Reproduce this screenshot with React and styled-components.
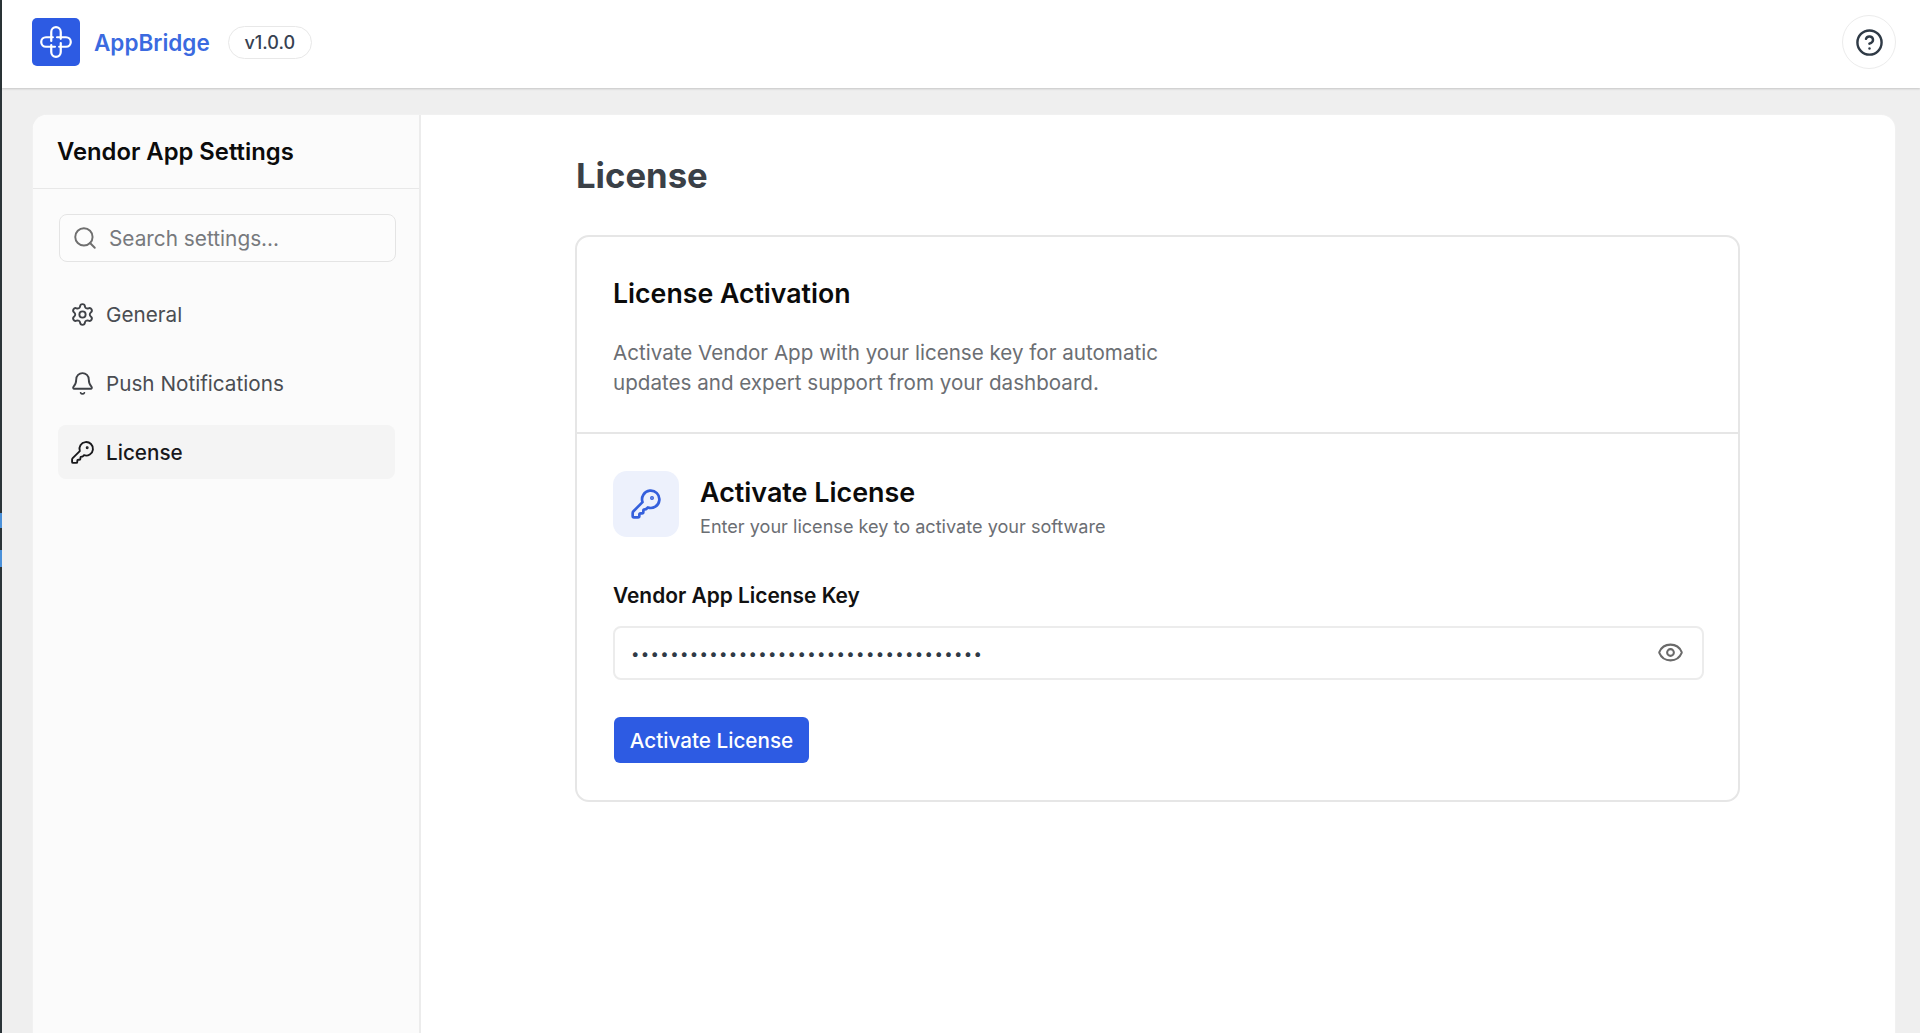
import React from "react";
import styled, { createGlobalStyle } from "styled-components";
import { Search, Settings, Bell, KeyRound, Eye, CircleHelp } from "lucide-react";

const GlobalStyle = createGlobalStyle`
    html, body {
        margin: 0;
        padding: 0;
        height: 100%;
        overflow: hidden;
    }
    body {
        font-family: Inter, "Liberation Sans", sans-serif;
        background: #efefef;
    }
`;

const Frame = styled.div`
    display: flex;
    height: 1033px;
    overflow: hidden;
`;
const EdgeStrip = styled.div`
    flex: 0 0 2px;
    background: linear-gradient(
        #2b3438 0 513px,
        #4a90d9 513px 528px,
        #2b3438 528px 550px,
        #4a90d9 550px 567px,
        #2b3438 567px
    );
`;
const Page = styled.div`
    flex: 1;
    display: flex;
    flex-direction: column;
    min-width: 0;
`;

//#region header
const Header = styled.header`
    flex: 0 0 88px;
    box-sizing: border-box;
    display: flex;
    align-items: center;
    justify-content: space-between;
    padding: 0 24px 4px 30px;
    background: #fff;
    box-shadow: 0 1px 2px rgba(0, 0, 0, 0.18);
`;
const Brand = styled.div`
    display: flex;
    align-items: center;
`;
const LogoTile = styled.div`
    width: 48px;
    height: 48px;
    border-radius: 5px;
    background: #2d5be3;
    display: flex;
    align-items: center;
    justify-content: center;
`;
const BrandName = styled.span`
    margin-left: 14px;
    font-size: 22.5px;
    font-weight: 600;
    color: #3b6ae0;
`;
const VersionPill = styled.span`
    margin-left: 18px;
    box-sizing: border-box;
    height: 33px;
    width: 84px;
    display: flex;
    align-items: center;
    justify-content: center;
    border: 1px solid #e8e8e8;
    border-radius: 17px;
    font-size: 18px;
    font-weight: 500;
    color: #374151;
`;
const HelpButton = styled.button`
    width: 54px;
    height: 54px;
    padding: 0;
    display: flex;
    align-items: center;
    justify-content: center;
    background: #fff;
    border: 1px solid #ececec;
    border-radius: 50%;
    color: #2f3a46;
`;
//#endregion

const Body = styled.div`
    flex: 1;
    min-height: 0;
    display: flex;
    padding: 27px 25px 0 31px;
`;
const Panel = styled.div`
    flex: 1;
    display: flex;
    background: #fff;
    border-radius: 14px 14px 0 0;
    box-shadow: 0 0 0 1px #f1f1f1;
    overflow: hidden;
`;

//#region sidebar
const Sidebar = styled.aside`
    flex: 0 0 388px;
    min-width: 0;
    box-sizing: border-box;
    background: #fbfbfb;
    border-right: 2px solid #ececec;
`;
const SidebarHead = styled.div`
    height: 74px;
    box-sizing: border-box;
    padding: 0 24px 1px;
    display: flex;
    align-items: center;
    border-bottom: 1px solid #e8e8e8;
`;
const SidebarTitle = styled.h2`
    margin: 0;
    font-size: 23.8px;
    font-weight: 600;
    color: #0b0b0b;
`;
const SidebarContent = styled.div`
    padding: 25px 23px 0 26px;
`;
const SearchBox = styled.label`
    height: 48px;
    box-sizing: border-box;
    display: flex;
    align-items: center;
    gap: 11px;
    padding: 0 12px;
    background: #fcfcfc;
    border: 1px solid #e4e4e4;
    border-radius: 8px;
    color: #6f6f6f;
`;
const SearchInput = styled.input`
    flex: 1;
    min-width: 0;
    border: 0;
    outline: 0;
    padding: 0;
    background: transparent;
    font: 400 20.8px Inter, "Liberation Sans", sans-serif;
    &::placeholder {
        color: #77797d;
        opacity: 1;
    }
`;
const NavList = styled.nav`
    display: flex;
    flex-direction: column;
    gap: 15px;
    margin: 25px 1px 0 -1px;
`;
const NavItem = styled.a`
    height: 54px;
    box-sizing: border-box;
    display: flex;
    align-items: center;
    gap: 11px;
    padding: 0 12px;
    border-radius: 8px;
    font-size: 20.7px;
    font-weight: ${(p) => (p.$active ? 500 : 400)};
    color: ${(p) => (p.$active ? "#18181b" : "#4a4d52")};
    background: ${(p) => (p.$active ? "#f4f4f4" : "transparent")};
`;
//#endregion

//#region main
const Main = styled.main`
    flex: 1;
    min-width: 0;
    padding: 37px 0 0 154px;
`;
const PageTitle = styled.h1`
    margin: 0 0 0 1px;
    line-height: 46px;
    font-size: 34.7px;
    font-weight: 700;
    color: #3a4047;
`;
const Card = styled.section`
    margin-top: 37px;
    width: 1165px;
    height: 567px;
    box-sizing: border-box;
    border: 2px solid #e6e6e6;
    border-radius: 14px;
`;
const CardIntro = styled.div`
    height: 197px;
    box-sizing: border-box;
    padding: 39px 36px 0;
    border-bottom: 2px solid #e6e6e6;
`;
const CardTitle = styled.h3`
    margin: 0;
    line-height: 34px;
    font-size: 26.7px;
    font-weight: 600;
    color: #0b0b0b;
`;
const CardText = styled.p`
    margin: 28px 0 0;
    max-width: 600px;
    line-height: 30px;
    font-size: 20.6px;
    color: #6b6e73;
`;
const CardBody = styled.div`
    padding: 37px 34px 0 36px;
`;
const ActivateHead = styled.div`
    display: flex;
    align-items: flex-start;
    gap: 21px;
`;
const KeyTile = styled.div`
    width: 66px;
    height: 66px;
    border-radius: 14px;
    background: #edf1fc;
    color: #3560dc;
    display: flex;
    align-items: center;
    justify-content: center;
`;
const ActivateCopy = styled.div`
    padding-top: 3px;
`;
const ActivateTitle = styled.h4`
    margin: 0;
    line-height: 36px;
    font-size: 26.9px;
    font-weight: 600;
    color: #0b0b0b;
`;
const ActivateSub = styled.div`
    margin-top: 4px;
    line-height: 24px;
    font-size: 18.1px;
    color: #6b6e73;
`;
const FieldLabel = styled.label`
    display: block;
    margin-top: 44px;
    line-height: 28px;
    font-size: 20.9px;
    font-weight: 600;
    color: #111;
`;
const KeyField = styled.div`
    position: relative;
    margin-top: 16px;
`;
const KeyInput = styled.input`
    display: block;
    width: 100%;
    height: 54px;
    box-sizing: border-box;
    padding: 0 60px 0 16px;
    border: 2px solid #ececec;
    border-radius: 8px;
    outline: 0;
    background: #fff;
    color: #2f3a46;
    font: 400 15px Inter, "Liberation Sans", sans-serif;
    letter-spacing: 1.35px;
`;
const EyeButton = styled.span`
    position: absolute;
    right: 20px;
    top: 13px;
    color: #6a6a6a;
    display: flex;
`;
const PrimaryButton = styled.button`
    display: block;
    margin: 37px 0 0 1px;
    width: 195px;
    height: 46px;
    padding: 0;
    border: 0;
    border-radius: 6px;
    background: #2d5be3;
    color: #fff;
    font: 500 20.7px Inter, "Liberation Sans", sans-serif;
`;
//#endregion

// four loops in a pinwheel
const LogoMark = () => (
    <svg width="38" height="38" viewBox="0 0 36 36" fill="none" stroke="#fff" strokeWidth="2.1" strokeLinecap="round" strokeLinejoin="round">
        <path d="M13.5 17V8.5a4.5 4.5 0 0 1 9 0V15" />
        <path d="M19 13.5h8.5a4.5 4.5 0 0 1 0 9H21" />
        <path d="M22.5 19v8.5a4.5 4.5 0 0 1-9 0V21" />
        <path d="M17 22.5H8.5a4.5 4.5 0 0 1 0-9H15" />
    </svg>
);

export default function App() {
    return (
        <Frame>
            <GlobalStyle />
            <EdgeStrip />
            <Page>
                <Header>
                    <Brand>
                        <LogoTile>
                            <LogoMark />
                        </LogoTile>
                        <BrandName>AppBridge</BrandName>
                        <VersionPill>v1.0.0</VersionPill>
                    </Brand>
                    <HelpButton aria-label="Help">
                        <CircleHelp size={29} strokeWidth={2} />
                    </HelpButton>
                </Header>
                <Body>
                    <Panel>
                        <Sidebar>
                            <SidebarHead>
                                <SidebarTitle>Vendor App Settings</SidebarTitle>
                            </SidebarHead>
                            <SidebarContent>
                                <SearchBox>
                                    <Search size={26} strokeWidth={1.8} />
                                    <SearchInput placeholder="Search settings..." />
                                </SearchBox>
                                <NavList>
                                    <NavItem>
                                        <Settings size={25} strokeWidth={1.8} color="#3f4247" />
                                        General
                                    </NavItem>
                                    <NavItem>
                                        <Bell size={25} strokeWidth={1.8} color="#3f4247" />
                                        Push Notifications
                                    </NavItem>
                                    <NavItem $active>
                                        <KeyRound size={25} strokeWidth={1.8} color="#18181b" />
                                        License
                                    </NavItem>
                                </NavList>
                            </SidebarContent>
                        </Sidebar>
                        <Main>
                            <PageTitle>License</PageTitle>
                            <Card>
                                <CardIntro>
                                    <CardTitle>License Activation</CardTitle>
                                    <CardText>
                                        Activate Vendor App with your license key for automatic updates and expert support from your dashboard.
                                    </CardText>
                                </CardIntro>
                                <CardBody>
                                    <ActivateHead>
                                        <KeyTile>
                                            <KeyRound size={32} strokeWidth={2} />
                                        </KeyTile>
                                        <ActivateCopy>
                                            <ActivateTitle>Activate License</ActivateTitle>
                                            <ActivateSub>Enter your license key to activate your software</ActivateSub>
                                        </ActivateCopy>
                                    </ActivateHead>
                                    <FieldLabel>Vendor App License Key</FieldLabel>
                                    <KeyField>
                                        <KeyInput type="password" defaultValue="000000000000000000000000000000000000" />
                                        <EyeButton>
                                            <Eye size={27} strokeWidth={1.8} />
                                        </EyeButton>
                                    </KeyField>
                                    <PrimaryButton>Activate License</PrimaryButton>
                                </CardBody>
                            </Card>
                        </Main>
                    </Panel>
                </Body>
            </Page>
        </Frame>
    );
}
